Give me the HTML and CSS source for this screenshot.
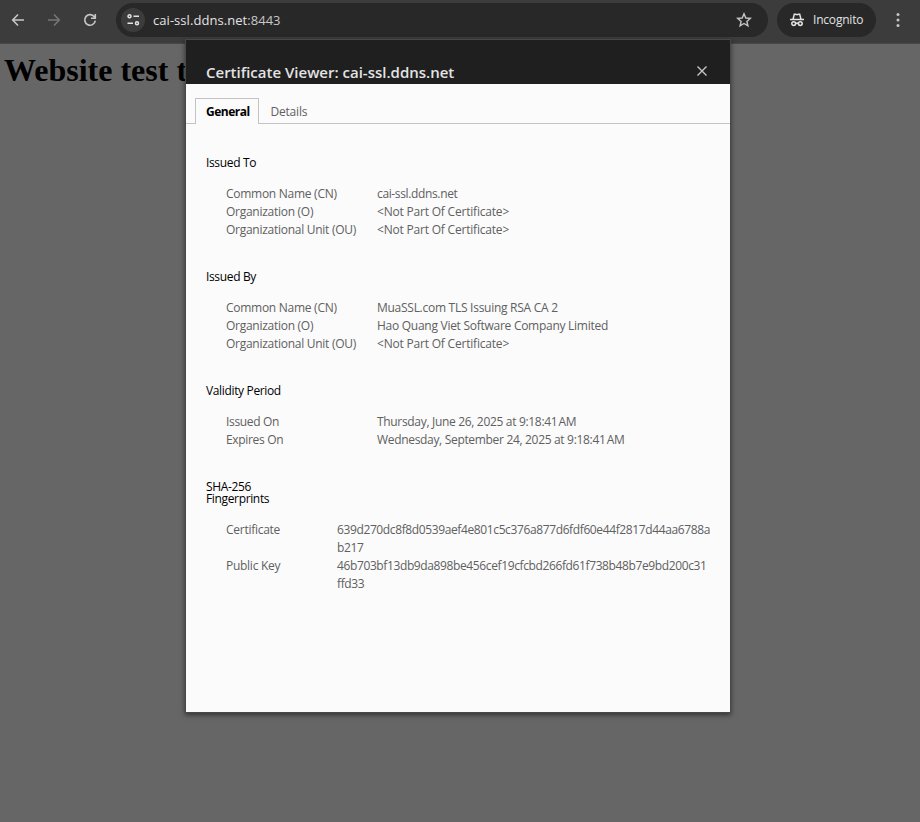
FILE: index.html
```html
<!DOCTYPE html>
<html lang="en">
<head>
<meta charset="utf-8">
<title>cai-ssl.ddns.net:8443</title>
<link rel="stylesheet" href="styles.css">
</head>
<body>
<header class="toolbar">
  <svg class="nav" viewBox="0 0 16 16"><path d="M14 8H3M8 2.500 2.700 8 8 13.500"/></svg>
  <svg class="nav off" viewBox="0 0 16 16"><path d="M2 8h11M8 2.500 13.300 8 8 13.500"/></svg>
  <svg class="nav" viewBox="0 0 16 16"><path d="M12.600 5.200A5.300 5.300 0 1 0 13.300 8.700M13.300 2v4.200H9"/></svg>
  <div class="omnibox">
    <span class="site"><svg viewBox="0 0 16 16"><circle cx="4.500" cy="4.300" r="1.500"/><path d="M8.500 4.300H14M2.500 11.300H8"/><circle cx="12" cy="11.300" r="1.500"/></svg></span>
    <span class="url">cai-ssl.ddns.net<span class="port">:8443</span></span>
    <svg class="star" viewBox="0 0 16 16"><path d="M8 1.800 9.800 6l4.500.4-3.400 3 1 4.400L8 11.500l-3.900 2.300 1-4.400-3.400-3L6.200 6Z"/></svg>
  </div>
  <div class="incognito">
    <svg viewBox="0 0 16 16"><path d="M1 7.500h14M4 7.200 5.300 2.300h1.200L8 2.800l1.500-.5h1.200L12 7.200M6.700 11.500q1.300-.8 2.600 0"/><circle cx="4.700" cy="11.600" r="1.900"/><circle cx="11.300" cy="11.600" r="1.900"/></svg>
    <span>Incognito</span>
  </div>
  <svg class="menu" viewBox="0 0 4 16"><circle cx="2" cy="2.500" r="1.500"/><circle cx="2" cy="8" r="1.500"/><circle cx="2" cy="13.500" r="1.500"/></svg>
</header>
<main><h1>Website test t</h1></main>
<section class="dialog">
  <header class="title"><h2>Certificate Viewer: cai-ssl.ddns.net</h2><svg viewBox="0 0 12 12"><path d="M1.500 1.500l9 9M10.500 1.500l-9 9"/></svg></header>
  <nav class="tabs"><span class="tab active">General</span><span class="tab">Details</span></nav>
  <div class="content">
    <section class="group">
      <h3>Issued To</h3>
      <dl>
        <dt>Common Name (CN)</dt><dd class="host">cai-ssl.ddns.net</dd>
        <dt>Organization (O)</dt><dd class="none">&lt;Not Part Of Certificate&gt;</dd>
        <dt>Organizational Unit (OU)</dt><dd class="none">&lt;Not Part Of Certificate&gt;</dd>
      </dl>
    </section>
    <section class="group">
      <h3>Issued By</h3>
      <dl>
        <dt>Common Name (CN)</dt><dd>MuaSSL.com TLS Issuing RSA CA 2</dd>
        <dt>Organization (O)</dt><dd>Hao Quang Viet Software Company Limited</dd>
        <dt>Organizational Unit (OU)</dt><dd class="none">&lt;Not Part Of Certificate&gt;</dd>
      </dl>
    </section>
    <section class="group">
      <h3>Validity Period</h3>
      <dl class="dates">
        <dt>Issued On</dt><dd>Thursday, June 26, 2025 at 9:18:41&#8239;AM</dd>
        <dt>Expires On</dt><dd>Wednesday, September 24, 2025 at 9:18:41&#8239;AM</dd>
      </dl>
    </section>
    <section class="group">
      <h3>SHA-256<br>Fingerprints</h3>
      <dl class="prints">
        <dt>Certificate</dt><dd>639d270dc8f8d0539aef4e801c5c376a877d6fdf60e44f2817d44aa6788a<br>b217</dd>
        <dt>Public Key</dt><dd>46b703bf13db9da898be456cef19cfcbd266fd61f738b48b7e9bd200c31<br>ffd33</dd>
      </dl>
    </section>
  </div>
</section>
</body>
</html>
```
FILE: styles.css
```css
* { box-sizing: border-box; }
body { margin: 0; height: 822px; overflow: hidden; background: #666; font: 12px/18px "Open Sans", "Noto Sans", sans-serif; }
svg { display: block; flex: none; fill: none; stroke: #c7c7c7; stroke-width: 1.6; }
h1, h2, h3, dl, dd { margin: 0; font-weight: 400; }

.toolbar { display: flex; align-items: center; height: 44px; padding: 0 20px 4px 10px; background: #3c3c3c; border-bottom: 1px solid #484848; }
.nav { width: 16px; height: 16px; margin-right: 20px; }
.nav.off { stroke: #757575; }
.toolbar .omnibox { display: flex; align-items: center; width: 652px; height: 34px; margin-left: -2px; padding: 0 16px 0 5px; border-radius: 17px; background: #282828; }
.site { display: grid; place-items: center; width: 24px; height: 24px; border-radius: 50%; background: #3c3c3c; }
.site svg { width: 16px; height: 16px; stroke: #e3e3e3; stroke-width: 1.5; }
.url { flex: 1; margin-left: 8px; font-size: 13px; letter-spacing: .05px; color: #e3e3e3; }
.port { color: #c7c7c7; }
.star { width: 16px; height: 16px; stroke-width: 1.4; }
.incognito { display: flex; align-items: center; width: 99px; height: 34px; margin-left: 9px; padding-left: 12px; border-radius: 17px; background: #282828; color: #e3e3e3; letter-spacing: -.2px; }
.incognito svg { width: 16px; height: 16px; margin-right: 8px; stroke: #e3e3e3; stroke-width: 1.5; }
.menu { width: 4px; height: 16px; margin-left: 20px; fill: #c7c7c7; stroke: none; }

main { padding: 8px 4px; }
h1 { font: bold 32px/36px "Liberation Serif", serif; color: #000; }

.dialog { position: absolute; left: 186px; top: 40px; width: 544px; height: 672px; background: #fbfbfb; box-shadow: 0 0 0 1px #484848, 0 2px 5px 1px rgba(0, 0, 0, .5); color: #606060; }
.title { display: flex; justify-content: space-between; height: 44px; padding: 22px 22px 0 20px; background: #1f1f1f; }
.title h2 { font-size: 15px; line-height: 20px; font-weight: 600; letter-spacing: 0; color: #e3e3e3; white-space: nowrap; }
.title svg { width: 12px; height: 12px; margin-top: 3px; stroke-width: 1.4; }
.tabs { display: flex; align-items: flex-end; height: 40px; padding-left: 9px; box-shadow: inset 0 -1px #c3c3c3; }
.tab { height: 26px; padding: 0 10.500px; line-height: 26px; border: 1px solid transparent; border-bottom: 0; letter-spacing: -.2px; }
.tab.active { width: 64px; padding: 0 10px; border-color: #c3c3c3; background: #fbfbfb; font-weight: 700; letter-spacing: -.5px; color: #000; }
.content { display: flex; flex-direction: column; gap: 32px; padding: 33px 20px; white-space: nowrap; }
h3 { margin-bottom: 16px; font-size: 12px; line-height: 12px; color: #000; letter-spacing: -.35px; }
dl { display: grid; grid-template-columns: 151px 1fr; padding-left: 20px; letter-spacing: -.27px; }
.none { letter-spacing: -.2px; }
.host { letter-spacing: -.36px; }
.dates { letter-spacing: -.32px; }
.prints { grid-template-columns: 111px 1fr; }
.prints dd { letter-spacing: -.38px; }
```
